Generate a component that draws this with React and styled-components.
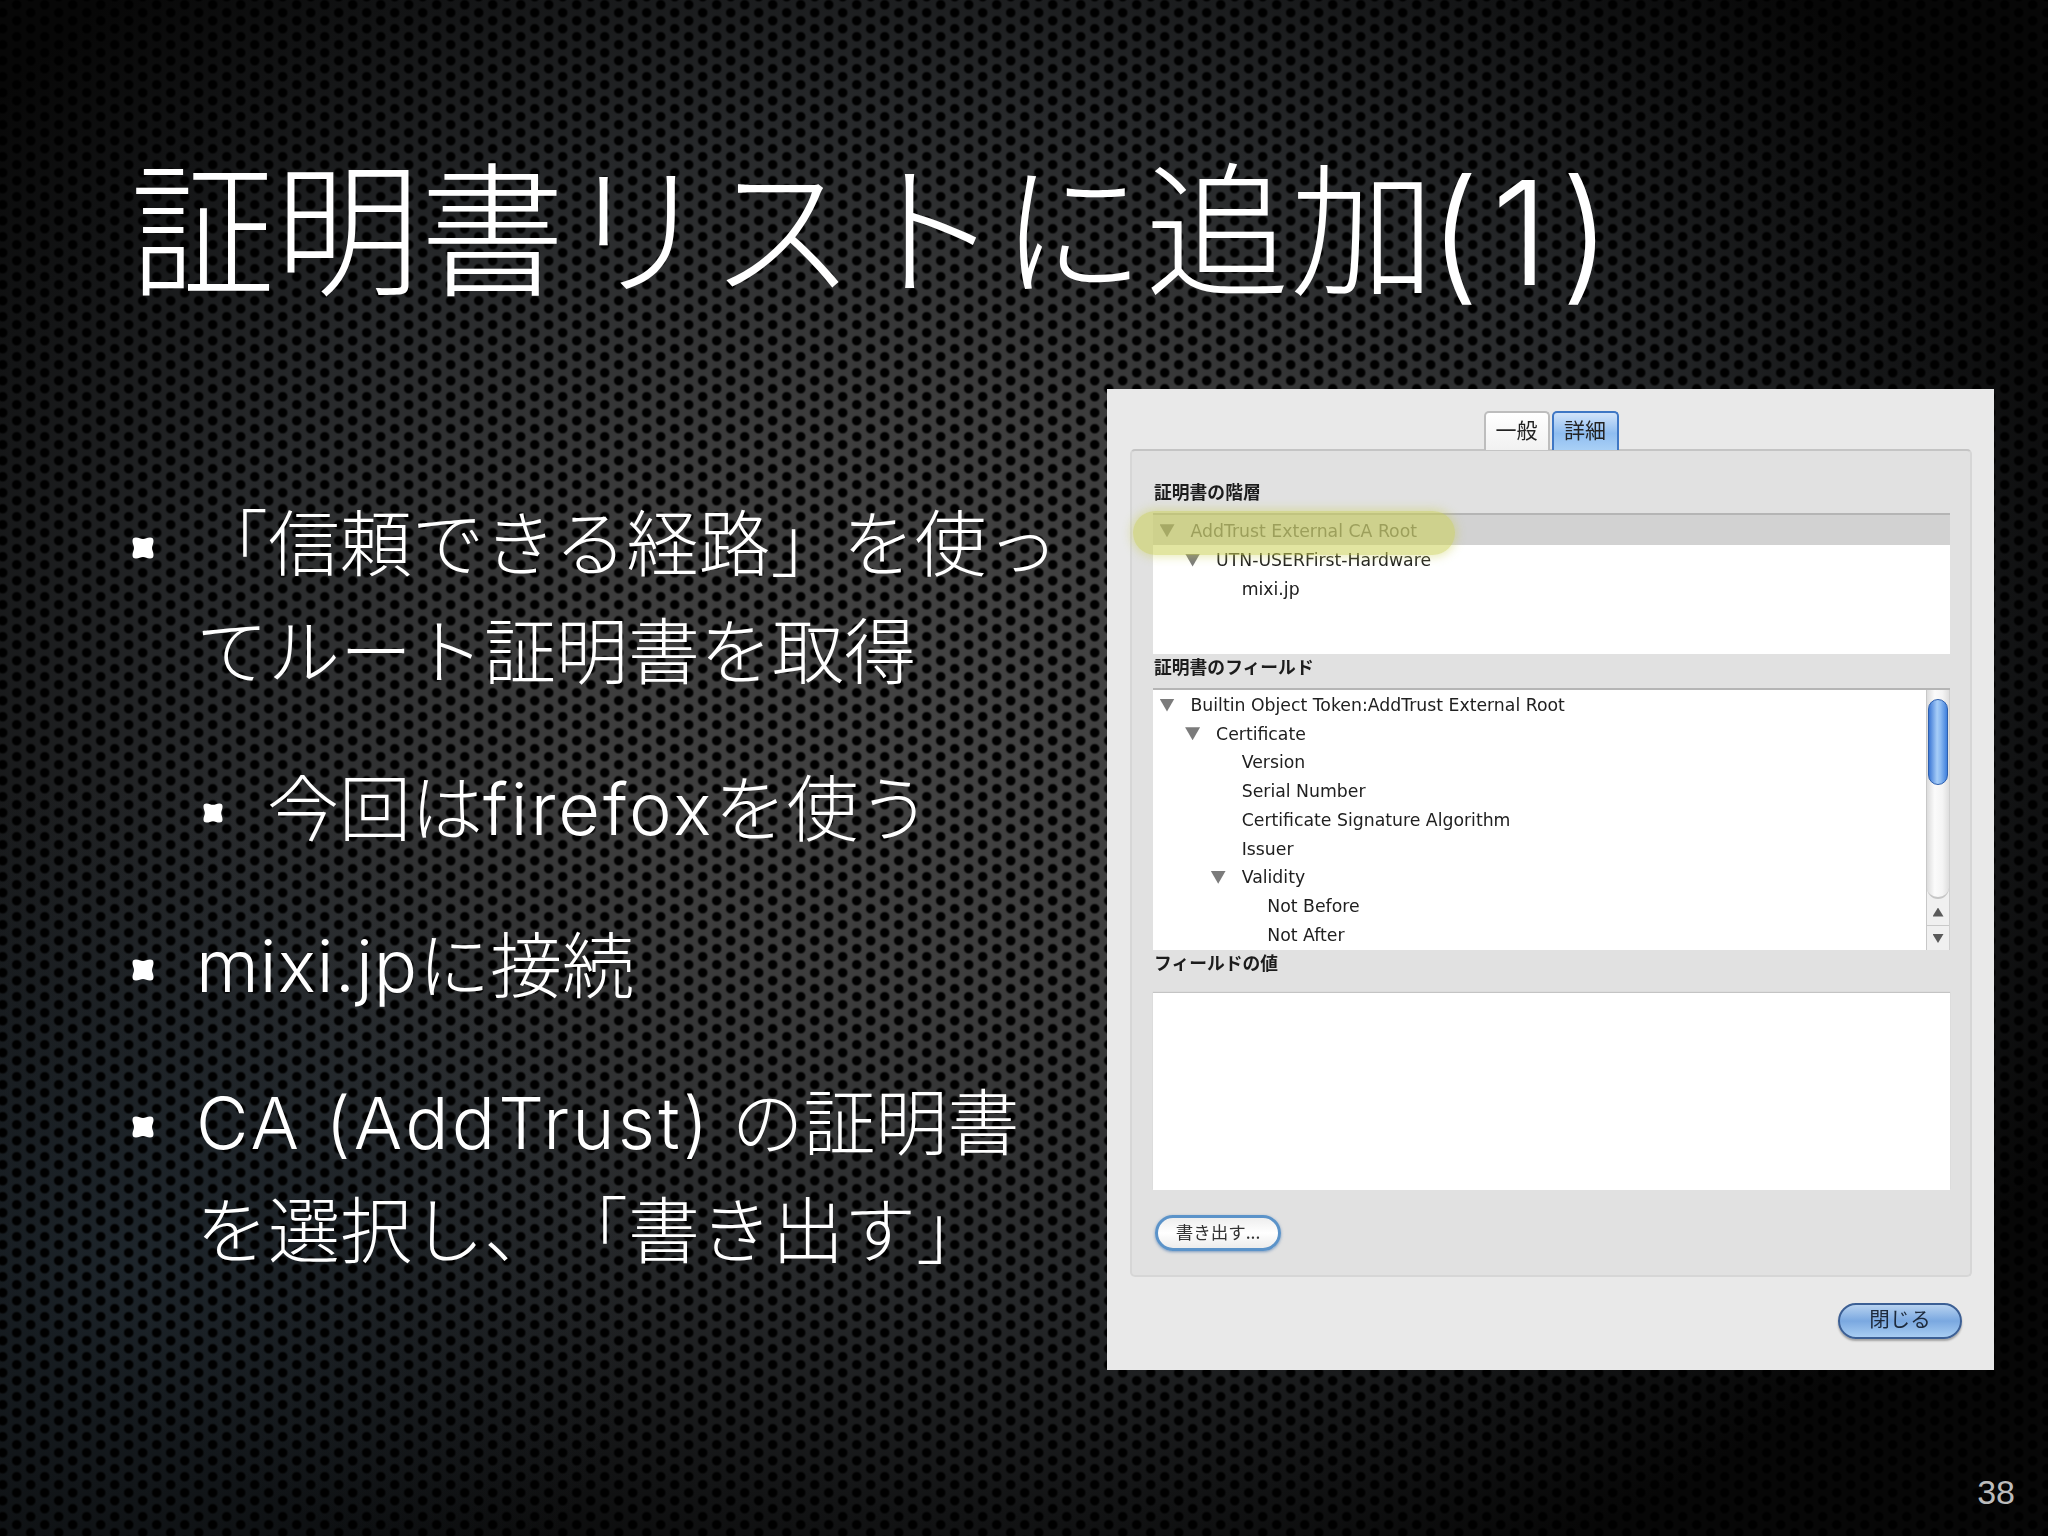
import React from 'react';
import styled, { createGlobalStyle } from 'styled-components';

const GlobalStyle = createGlobalStyle`
  html, body {
    margin: 0;
    padding: 0;
    background: #000;
  }
`;

const slideFont = 'Inter, "Noto Sans CJK JP", "Noto Sans", sans-serif';
const uiFont = '"DejaVu Sans", "Noto Sans CJK JP", sans-serif';

const Page = styled.div`
  width: 2048px;
  height: 1536px;
  overflow: hidden;
  display: flex;
  flex-direction: column;
  color: #fff;
  font-family: ${slideFont};
  font-weight: 300;
  text-spacing-trim: space-all;
  background-color: #060606;
  background-image:
    radial-gradient(circle at 14px 8px, #000 3.8px, rgba(0, 0, 0, 0) 5.6px),
    radial-gradient(circle at 14px 8px, #000 3.8px, rgba(0, 0, 0, 0) 5.6px),
    radial-gradient(ellipse 520px 480px at 130px 1260px, rgba(34, 44, 52, 0.75), rgba(34, 44, 52, 0) 100%),
    radial-gradient(ellipse 1240px 960px at 960px 700px, #434343 0, #3d3d3d 30%, #26282a 62%, #121314 85%, #070707 100%);
  background-size: 28px 16px, 28px 16px, 100% 100%, 100% 100%;
  background-position: 2.7px -3.3px, 16.7px 4.7px, 0 0, 0 0;
`;

const Title = styled.h1`
  margin: 153px 0 0 130px;
  font-size: 145px;
  line-height: 160px;
  font-weight: 300;
  white-space: nowrap;
`;

const TitleNumber = styled.span`
  margin-left: -6px;
  letter-spacing: 12px;
`;

const Latin = styled.span`
  letter-spacing: ${({ $track }) => $track}px;
`;

const Main = styled.div`
  display: flex;
  margin-top: 76px;
`;

const BulletList = styled.ul`
  width: 975px;
  margin: 101px 0 0 132px;
  padding: 0;
  list-style: none;
  font-size: 72px;
  line-height: 108px;
`;

const Item = styled.li`
  display: flex;
  margin: 0 0 49px ${({ $sub }) => ($sub ? 71 : 0)}px;
  white-space: nowrap;
`;

const BulletSlot = styled.span`
  flex: none;
  box-sizing: border-box;
  width: 64px;
  height: 108px;
  padding-top: 8px;
  display: flex;
  align-items: center;
`;

const Bullet = ({ size = 22 }) => (
  <svg width={size} height={size} viewBox="0 0 22 22">
    <path d="M4 0.5 C7 0.5 8.5 2 11 2 C13.5 2 15 0.5 18 0.5 C20.5 0.5 21.5 1.5 21.5 4 C21.5 7 20 8.5 20 11 C20 13.5 21.5 15 21.5 18 C21.5 20.5 20.5 21.5 18 21.5 C15 21.5 13.5 20 11 20 C8.5 20 7 21.5 4 21.5 C1.5 21.5 0.5 20.5 0.5 18 C0.5 15 2 13.5 2 11 C2 8.5 0.5 7 0.5 4 C0.5 1.5 1.5 0.5 4 0.5 Z" fill="#fff" />
  </svg>
);

const Dialog = styled.div`
  position: relative;
  flex: none;
  box-sizing: border-box;
  width: 887px;
  height: 981px;
  padding: 22px 22px 0 23px;
  background: #e9e9e9;
  color: #161616;
  font-family: ${uiFont};
  font-weight: 400;
  filter: blur(0.7px);
`;

const Tabs = styled.div`
  display: flex;
  justify-content: center;
  gap: 2px;
  margin-bottom: -1px;
  position: relative;
  z-index: 1;
`;

const Tab = styled.div`
  box-sizing: border-box;
  width: ${({ $active }) => ($active ? 67 : 66)}px;
  height: 39px;
  padding-bottom: 5px;
  display: flex;
  align-items: center;
  justify-content: center;
  border-radius: 5px 5px 0 0;
  font-family: "Noto Sans CJK JP", sans-serif;
  font-size: 21px;
  color: #222;
  border: 2px solid ${({ $active }) => ($active ? '#3f77c4' : '#bdbdbd')};
  border-bottom: 0;
  background: ${({ $active }) =>
    $active ? 'linear-gradient(#d2e4fa, #8fbdf0 55%, #a9d0f6)' : 'linear-gradient(#ffffff, #f1f1f1)'};
`;

const Panel = styled.div`
  box-sizing: border-box;
  height: 828px;
  padding: 28px 20px 0 21px;
  background: #e1e1e1;
  border: 2px solid #d6d6d6;
  border-top-color: #c4c4c4;
  border-radius: 5px;
  display: flex;
  flex-direction: column;
`;

const Label = styled.div`
  height: 24px;
  line-height: 24px;
  padding-left: 1px;
  font-family: "Noto Sans CJK JP", sans-serif;
  font-size: 17.8px;
  font-weight: 700;
  color: #1c1c1c;
  white-space: nowrap;
`;

const TreeBox = styled.div`
  box-sizing: border-box;
  display: flex;
  height: ${({ $height }) => $height}px;
  margin-top: ${({ $gap }) => $gap}px;
  background: #fff;
  border-top: 2px solid #b5b5b5;
  overflow: hidden;
`;

const TreeRows = styled.div`
  flex: 1;
  min-width: 0;
`;

const Row = styled.div`
  box-sizing: border-box;
  display: flex;
  align-items: center;
  height: ${({ $selected }) => ($selected ? 30 : 28.7)}px;
  padding: 1.5px 0 0 ${({ $depth }) => 6.5 + $depth * 25.6}px;
  font-size: 17.3px;
  white-space: nowrap;
  background: ${({ $selected }) => ($selected ? '#d2d2d2' : 'transparent')};
  color: ${({ $selected }) => ($selected ? '#646464' : '#202020')};
`;

const ArrowSlot = styled.span`
  flex: none;
  width: 31px;
  display: flex;
  align-items: center;
`;

const Arrow = styled.span`
  width: 15px;
  height: 13px;
  background: #7b7b7b;
  clip-path: polygon(0 0, 100% 0, 50% 100%);
`;

const Scrollbar = styled.div`
  flex: none;
  box-sizing: border-box;
  width: 24px;
  display: flex;
  flex-direction: column;
  align-items: center;
  background: #f0f0f0;
  border-left: 1px solid #c8c8c8;
  border-right: 1px solid #cfcfcf;
`;

const ScrollTrack = styled.div`
  box-sizing: border-box;
  flex: none;
  width: 100%;
  height: 209px;
  padding: 9px 1px 0;
  border-radius: 0 0 11px 11px;
  background: linear-gradient(90deg, #dcdcdc, #fbfbfb 35%, #f4f4f4 70%, #dedede);
  border-bottom: 2px solid #c6c6c6;
`;

const Thumb = styled.div`
  box-sizing: border-box;
  height: 86px;
  border-radius: 10px;
  background: linear-gradient(90deg, #3d78d6, #a6cdf8 45%, #8ab9f2 65%, #3f7fdc 100%);
  border: 1px solid #2d5fae;
`;

const ScrollButton = styled.div`
  box-sizing: border-box;
  flex: none;
  width: 100%;
  height: 26px;
  display: flex;
  align-items: center;
  justify-content: center;
  border-top: ${({ $divided }) => ($divided ? '1px solid #c9c9c9' : '0')};
`;

const ScrollArrow = styled.span`
  width: 11px;
  height: 9px;
  background: #5a5a5a;
  clip-path: ${({ $up }) =>
    $up ? 'polygon(50% 0, 100% 100%, 0 100%)' : 'polygon(0 0, 100% 0, 50% 100%)'};
`;

const ValueBox = styled.div`
  height: 197px;
  margin-top: 19px;
  background: #fff;
  box-shadow: 0 -1px 1px #c4c4c4;
`;

const ExportButton = styled.div`
  box-sizing: border-box;
  width: 126px;
  height: 36px;
  margin: 25px 0 0 2px;
  padding-bottom: 4px;
  display: flex;
  align-items: center;
  justify-content: center;
  border-radius: 18px;
  border: 3px solid #5b93c9;
  background: linear-gradient(#eeeeee, #ffffff 50%, #ececec);
  font-family: "Noto Sans CJK JP", sans-serif;
  font-size: 17.5px;
  color: #333;
  box-shadow: 0 1px 3px rgba(60, 110, 170, 0.6);
`;

const DialogFooter = styled.div`
  display: flex;
  justify-content: flex-end;
  padding: 26px 10px 0 0;
`;

const CloseButton = styled.div`
  box-sizing: border-box;
  width: 124px;
  height: 36px;
  padding-bottom: 6px;
  display: flex;
  align-items: center;
  justify-content: center;
  border-radius: 18px;
  border: 2px solid #3c5f94;
  background: linear-gradient(#b7d2f0, #7aa8e0 50%, #a8cdf2);
  font-family: "Noto Sans CJK JP", sans-serif;
  font-size: 20.5px;
  color: #1d2a3c;
  box-shadow: 0 2px 2px rgba(0, 0, 0, 0.3);
`;

const Highlight = styled.div`
  position: absolute;
  left: 26px;
  top: 122px;
  width: 322px;
  height: 44px;
  border-radius: 22px;
  background: rgba(203, 208, 84, 0.55);
  box-shadow: 0 0 10px 2px rgba(203, 208, 84, 0.42);
`;

const PageNumber = styled.div`
  margin: 100px 33px 0 0;
  text-align: right;
  font-family: "Liberation Sans", sans-serif;
  font-weight: 400;
  font-size: 34px;
  line-height: 44px;
  color: #bcbcbc;
`;

const hierarchy = [
  { text: 'AddTrust External CA Root', depth: 0, open: true, selected: true },
  { text: 'UTN-USERFirst-Hardware', depth: 1, open: true },
  { text: 'mixi.jp', depth: 2 },
];

const fields = [
  { text: 'Builtin Object Token:AddTrust External Root', depth: 0, open: true },
  { text: 'Certificate', depth: 1, open: true },
  { text: 'Version', depth: 2 },
  { text: 'Serial Number', depth: 2 },
  { text: 'Certificate Signature Algorithm', depth: 2 },
  { text: 'Issuer', depth: 2 },
  { text: 'Validity', depth: 2, open: true },
  { text: 'Not Before', depth: 3 },
  { text: 'Not After', depth: 3 },
];

const TreeRow = ({ text, depth, open, selected }) => (
  <Row $depth={depth} $selected={selected}>
    <ArrowSlot>{open && <Arrow />}</ArrowSlot>
    {text}
  </Row>
);

export default function App() {
  return (
    <Page>
      <GlobalStyle />
      <Title>証明書リストに追加<TitleNumber>(1)</TitleNumber></Title>
      <Main>
        <BulletList>
          <Item>
            <BulletSlot><Bullet /></BulletSlot>
            <span>「信頼できる経路」を使っ<br />てルート証明書を取得</span>
          </Item>
          <Item $sub>
            <BulletSlot><Bullet size={20} /></BulletSlot>
            <span>今回は<Latin $track={3}>firefox</Latin>を使う</span>
          </Item>
          <Item>
            <BulletSlot><Bullet /></BulletSlot>
            <span><Latin $track={1}>mixi.jp</Latin>に接続</span>
          </Item>
          <Item>
            <BulletSlot><Bullet /></BulletSlot>
            <span><Latin $track={3.2}>CA (AddTrust)</Latin> の証明書<br />を選択し、「書き出す」</span>
          </Item>
        </BulletList>
        <Dialog>
          <Tabs>
            <Tab>一般</Tab>
            <Tab $active>詳細</Tab>
          </Tabs>
          <Panel>
            <Label>証明書の階層</Label>
            <TreeBox $height={141} $gap={10}>
              <TreeRows>
                {hierarchy.map(row => <TreeRow key={row.text} {...row} />)}
              </TreeRows>
            </TreeBox>
            <Label>証明書のフィールド</Label>
            <TreeBox $height={262} $gap={10}>
              <TreeRows>
                {fields.map(row => <TreeRow key={row.text} {...row} />)}
              </TreeRows>
              <Scrollbar>
                <ScrollTrack><Thumb /></ScrollTrack>
                <ScrollButton><ScrollArrow $up /></ScrollButton>
                <ScrollButton $divided><ScrollArrow /></ScrollButton>
              </Scrollbar>
            </TreeBox>
            <Label>フィールドの値</Label>
            <ValueBox />
            <ExportButton>書き出す...</ExportButton>
          </Panel>
          <DialogFooter>
            <CloseButton>閉じる</CloseButton>
          </DialogFooter>
          <Highlight />
        </Dialog>
      </Main>
      <PageNumber>38</PageNumber>
    </Page>
  );
}
